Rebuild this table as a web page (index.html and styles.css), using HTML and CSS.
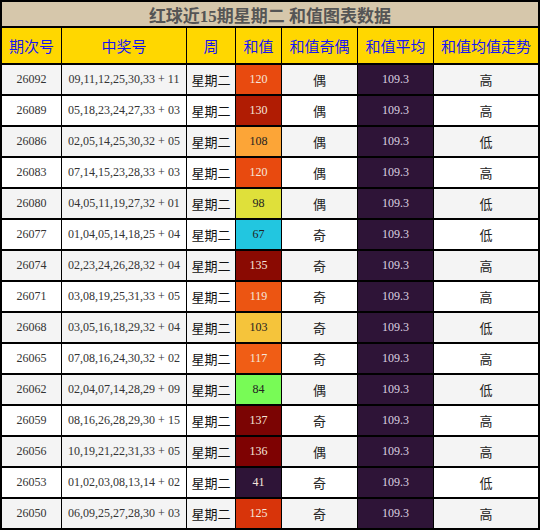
FILE: index.html
```html
<!DOCTYPE html>
<html lang="zh">
<head>
<meta charset="utf-8">
<title>红球近15期星期二 和值图表数据</title>
<link rel="stylesheet" href="styles.css">
</head>
<body>
<div class="board">
  <div class="title">红球近15期星期二 和值图表数据</div>
  <div class="row head">
    <div class="cell">期次号</div><div class="cell">中奖号</div><div class="cell">周</div><div class="cell">和值</div><div class="cell">和值奇偶</div><div class="cell">和值平均</div><div class="cell">和值均值走势</div>
  </div>
  <div class="row odd"><div class="cell">26092</div><div class="cell">09,11,12,25,30,33 + 11</div><div class="cell cjk wk">星期二</div><div class="cell sum" style="background:#e84a0f">120</div><div class="cell cjk">偶</div><div class="cell avg">109.3</div><div class="cell cjk">高</div></div>
  <div class="row"><div class="cell">26089</div><div class="cell">05,18,23,24,27,33 + 03</div><div class="cell cjk wk">星期二</div><div class="cell sum" style="background:#b01c03">130</div><div class="cell cjk">偶</div><div class="cell avg">109.3</div><div class="cell cjk">高</div></div>
  <div class="row odd"><div class="cell">26086</div><div class="cell">02,05,14,25,30,32 + 05</div><div class="cell cjk wk">星期二</div><div class="cell sum light" style="background:#fca537">108</div><div class="cell cjk">偶</div><div class="cell avg">109.3</div><div class="cell cjk">低</div></div>
  <div class="row"><div class="cell">26083</div><div class="cell">07,14,15,23,28,33 + 03</div><div class="cell cjk wk">星期二</div><div class="cell sum" style="background:#e84a0f">120</div><div class="cell cjk">偶</div><div class="cell avg">109.3</div><div class="cell cjk">高</div></div>
  <div class="row odd"><div class="cell">26080</div><div class="cell">04,05,11,19,27,32 + 01</div><div class="cell cjk wk">星期二</div><div class="cell sum light" style="background:#dfe03a">98</div><div class="cell cjk">偶</div><div class="cell avg">109.3</div><div class="cell cjk">低</div></div>
  <div class="row"><div class="cell">26077</div><div class="cell">01,04,05,14,18,25 + 04</div><div class="cell cjk wk">星期二</div><div class="cell sum light" style="background:#22c6e0">67</div><div class="cell cjk">奇</div><div class="cell avg">109.3</div><div class="cell cjk">低</div></div>
  <div class="row odd"><div class="cell">26074</div><div class="cell">02,23,24,26,28,32 + 04</div><div class="cell cjk wk">星期二</div><div class="cell sum" style="background:#8a0a02">135</div><div class="cell cjk">奇</div><div class="cell avg">109.3</div><div class="cell cjk">高</div></div>
  <div class="row"><div class="cell">26071</div><div class="cell">03,08,19,25,31,33 + 05</div><div class="cell cjk wk">星期二</div><div class="cell sum" style="background:#ec5512">119</div><div class="cell cjk">奇</div><div class="cell avg">109.3</div><div class="cell cjk">高</div></div>
  <div class="row odd"><div class="cell">26068</div><div class="cell">03,05,16,18,29,32 + 04</div><div class="cell cjk wk">星期二</div><div class="cell sum light" style="background:#f5c43b">103</div><div class="cell cjk">奇</div><div class="cell avg">109.3</div><div class="cell cjk">低</div></div>
  <div class="row"><div class="cell">26065</div><div class="cell">07,08,16,24,30,32 + 02</div><div class="cell cjk wk">星期二</div><div class="cell sum" style="background:#f05d15">117</div><div class="cell cjk">奇</div><div class="cell avg">109.3</div><div class="cell cjk">高</div></div>
  <div class="row odd"><div class="cell">26062</div><div class="cell">02,04,07,14,28,29 + 09</div><div class="cell cjk wk">星期二</div><div class="cell sum light" style="background:#78fb56">84</div><div class="cell cjk">偶</div><div class="cell avg">109.3</div><div class="cell cjk">低</div></div>
  <div class="row"><div class="cell">26059</div><div class="cell">08,16,26,28,29,30 + 15</div><div class="cell cjk wk">星期二</div><div class="cell sum" style="background:#7b0403">137</div><div class="cell cjk">奇</div><div class="cell avg">109.3</div><div class="cell cjk">高</div></div>
  <div class="row odd"><div class="cell">26056</div><div class="cell">10,19,21,22,31,33 + 05</div><div class="cell cjk wk">星期二</div><div class="cell sum" style="background:#7e0202">136</div><div class="cell cjk">偶</div><div class="cell avg">109.3</div><div class="cell cjk">高</div></div>
  <div class="row"><div class="cell">26053</div><div class="cell">01,02,03,08,13,14 + 02</div><div class="cell cjk wk">星期二</div><div class="cell sum" style="background:#2e1437">41</div><div class="cell cjk">奇</div><div class="cell avg">109.3</div><div class="cell cjk">低</div></div>
  <div class="row odd"><div class="cell">26050</div><div class="cell">06,09,25,27,28,30 + 03</div><div class="cell cjk wk">星期二</div><div class="cell sum" style="background:#d8340a">125</div><div class="cell cjk">奇</div><div class="cell avg">109.3</div><div class="cell cjk">高</div></div>
</div>
</body>
</html>
```

FILE: styles.css
```css
html, body {
  margin: 0;
  padding: 0;
  background: #fff;
}

.board {
  width: 540px;
  height: 530px;
  box-sizing: border-box;
  border: 2px solid #000;
  background: #000;
  display: flex;
  flex-direction: column;
  gap: 2px;
  font-family: "Liberation Serif", "Noto Sans CJK SC", serif;
}

.title {
  height: 24px;
  background: #d6c7ab;
  color: #555;
  font-weight: bold;
  font-size: 17px;
  display: flex;
  align-items: center;
  justify-content: center;
}

.row {
  display: grid;
  grid-template-columns: 59px 124px 48px 45px 75px 75px 104px;
  column-gap: 1px;
  height: 29px;
}

.cell {
  background: #fff;
  display: flex;
  align-items: center;
  justify-content: center;
  font-size: 12px;
  color: #333;
  white-space: nowrap;
}

.row.odd .cell {
  background: #f4f4f4;
}

.row.head {
  height: 35px;
}

.row.head .cell {
  background: #ffd700;
  color: #1616f2;
  font-family: "Noto Sans CJK SC", sans-serif;
  font-size: 15px;
}

.cell.cjk {
  font-size: 13px;
  color: #222;
}

.cell.wk {
  font-size: 13px;
  color: #111;
}

.row .cell.sum {
  color: #f6e6dc;
}

.row .cell.sum.light {
  color: #222;
}

.row .cell.avg {
  background: #2e1437;
  color: #ddd2e0;
}
```
